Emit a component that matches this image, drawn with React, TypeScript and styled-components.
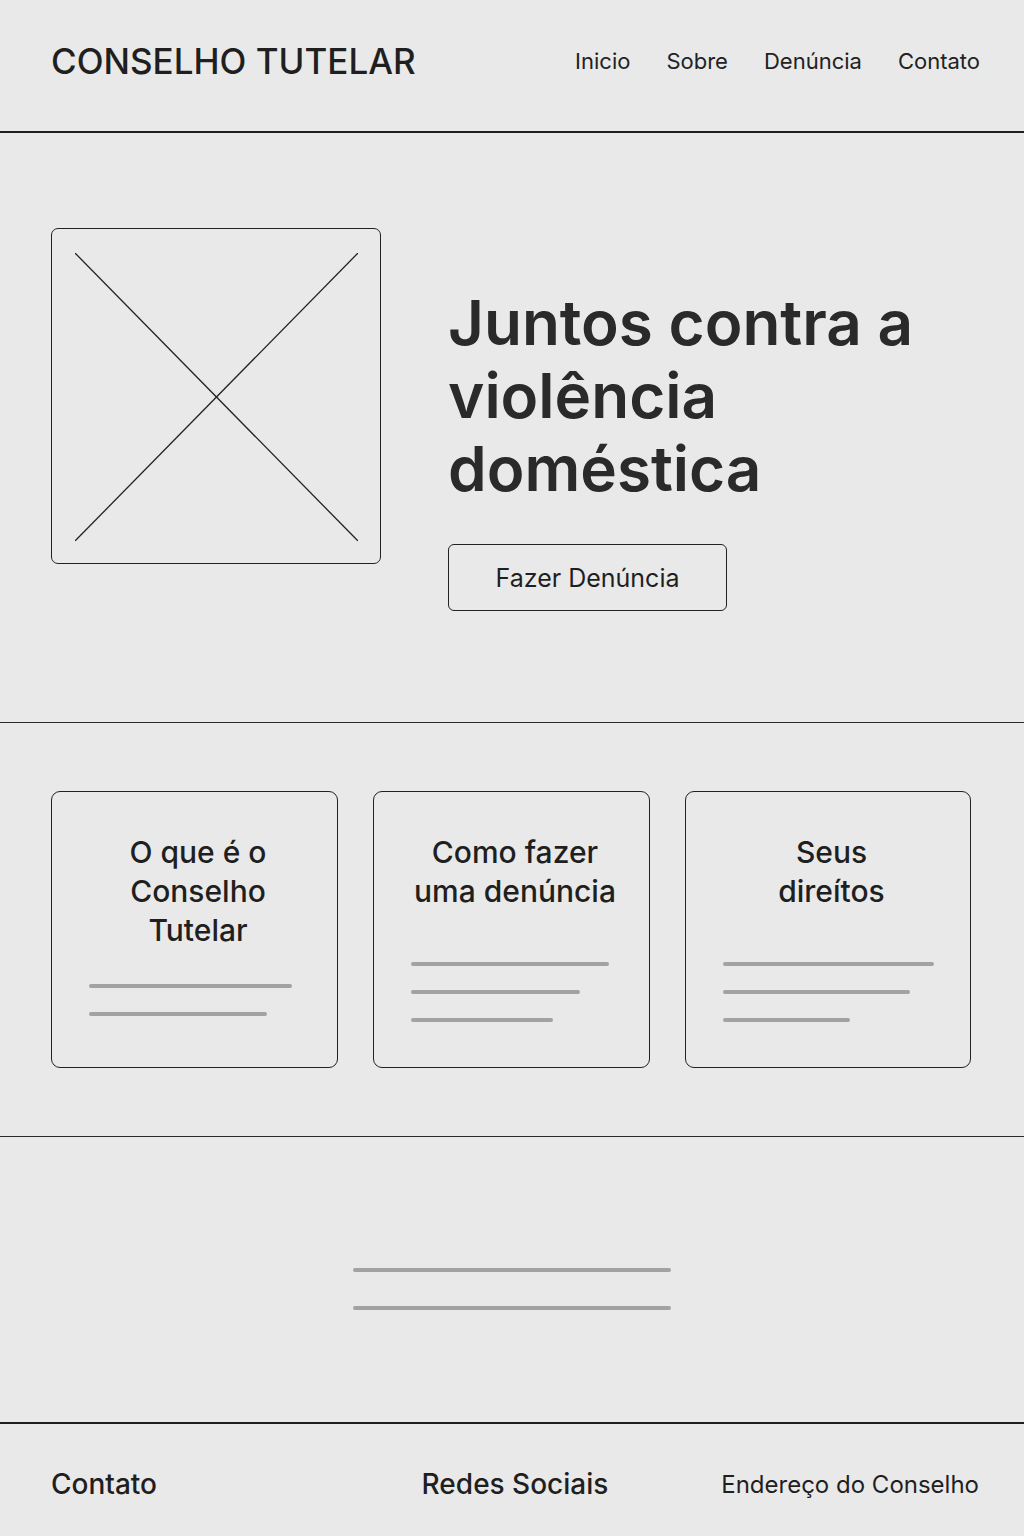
import styled, { createGlobalStyle } from "styled-components";

const GlobalStyle = createGlobalStyle`
  html, body {
    margin: 0;
    padding: 0;
    background: #e9e9e9;
  }
  body {
    font-family: Inter, "Noto Sans", "Liberation Sans", sans-serif;
    color: #222;
  }
  * {
    box-sizing: border-box;
  }
`;

const Page = styled.div`
  width: 1024px;
  min-height: 1536px;
  display: flex;
  flex-direction: column;
  background: #e9e9e9;
`;

const Header = styled.header`
  height: 133px;
  padding: 0 44px 10px 51px;
  display: flex;
  align-items: center;
  justify-content: space-between;
  border-bottom: 2px solid #1e1e1e;
`;

const Brand = styled.h1`
  margin: 0;
  font-size: 35px;
  font-weight: 500;
  letter-spacing: 0;
  color: #1f1f1f;
`;

const Nav = styled.nav`
  display: flex;
  gap: 36px;
`;

const NavLink = styled.a`
  font-size: 22px;
  color: #222;
  text-decoration: none;
`;

const Hero = styled.section`
  height: 590px;
  padding: 95px 0 0 51px;
  display: flex;
  gap: 67px;
  border-bottom: 1px solid #2a2a2a;
`;

const Placeholder = styled.div`
  width: 330px;
  height: 336px;
  border: 1.5px solid #222;
  border-radius: 7px;
  padding: 24px 22px 22px 23px;
  display: flex;
`;

const HeroText = styled.div`
  margin-top: 58px;
  display: flex;
  flex-direction: column;
  align-items: flex-start;
`;

const Headline = styled.h2`
  margin: 0;
  font-size: 62px;
  line-height: 73px;
  font-weight: 600;
  color: #2a2a2a;
  letter-spacing: 0;
`;

const Button = styled.button`
  margin-top: 39px;
  width: 279px;
  height: 67px;
  border: 1.5px solid #222;
  border-radius: 6px;
  background: transparent;
  font-family: inherit;
  font-size: 25px;
  color: #1f1f1f;
  cursor: pointer;
`;

const Cards = styled.section`
  height: 414px;
  padding: 68px 0 0 51px;
  display: grid;
  grid-template-columns: 287px 277px 286px;
  column-gap: 35px;
  align-items: start;
  border-bottom: 1px solid #2a2a2a;
`;

const Card = styled.article`
  height: 277px;
  border: 1.5px solid #222;
  border-radius: 9px;
  padding: 41px 30px 0 37px;
  display: flex;
  flex-direction: column;
`;

const CardTitle = styled.h3`
  margin: 0;
  font-size: 30px;
  line-height: 39px;
  font-weight: 500;
  text-align: center;
  color: #1f1f1f;
  white-space: nowrap;
`;

const Bars = styled.div<{ $top: number }>`
  margin-top: ${(p) => p.$top}px;
  display: flex;
  flex-direction: column;
  gap: 24px;
`;

const Bar = styled.div<{ $w: number }>`
  width: ${(p) => p.$w}px;
  height: 4px;
  border-radius: 2px;
  background: #a2a2a2;
`;

const Info = styled.section`
  height: 287px;
  padding-top: 131px;
  display: flex;
  flex-direction: column;
  align-items: center;
  gap: 34px;
  border-bottom: 2px solid #1e1e1e;
`;

const Footer = styled.footer`
  flex: 1;
  padding: 8px 45px 0 51px;
  display: grid;
  grid-template-columns: 1fr auto 1fr;
  align-items: center;
`;

const FooterTitle = styled.span`
  font-size: 28px;
  font-weight: 500;
  color: #1f1f1f;
`;

const FooterNote = styled.span`
  justify-self: end;
  font-size: 24px;
  color: #1f1f1f;
`;

const cards = [
  { title: ["O que é o", "Conselho", "Tutelar"], top: 34, bars: [203, 178] },
  { title: ["Como fazer", "uma denúncia"], top: 51, bars: [198, 169, 142] },
  { title: ["Seus", "direítos"], top: 51, bars: [211, 187, 127] },
];

export default function App() {
  return (
    <Page>
      <GlobalStyle />
      <Header>
        <Brand>CONSELHO TUTELAR</Brand>
        <Nav>
          <NavLink href="#">Inicio</NavLink>
          <NavLink href="#">Sobre</NavLink>
          <NavLink href="#">Denúncia</NavLink>
          <NavLink href="#">Contato</NavLink>
        </Nav>
      </Header>

      <Hero>
        <Placeholder>
          <svg width="100%" height="100%" viewBox="0 0 283 286" preserveAspectRatio="none">
            <line x1="0" y1="0" x2="283" y2="286" stroke="#222" strokeWidth="1.3" />
            <line x1="283" y1="0" x2="0" y2="286" stroke="#222" strokeWidth="1.3" />
          </svg>
        </Placeholder>
        <HeroText>
          <Headline>
            Juntos contra a<br />
            violência<br />
            doméstica
          </Headline>
          <Button>Fazer Denúncia</Button>
        </HeroText>
      </Hero>

      <Cards>
        {cards.map((c) => (
          <Card key={c.title.join(" ")}>
            <CardTitle>
              {c.title.map((line, i) => (
                <span key={line}>
                  {line}
                  {i < c.title.length - 1 && <br />}
                </span>
              ))}
            </CardTitle>
            <Bars $top={c.top}>
              {c.bars.map((w, i) => (
                <Bar key={i} $w={w} />
              ))}
            </Bars>
          </Card>
        ))}
      </Cards>

      <Info>
        <Bar $w={318} />
        <Bar $w={318} />
      </Info>

      <Footer>
        <FooterTitle>Contato</FooterTitle>
        <FooterTitle>Redes Sociais</FooterTitle>
        <FooterNote>Endereço do Conselho</FooterNote>
      </Footer>
    </Page>
  );
}
